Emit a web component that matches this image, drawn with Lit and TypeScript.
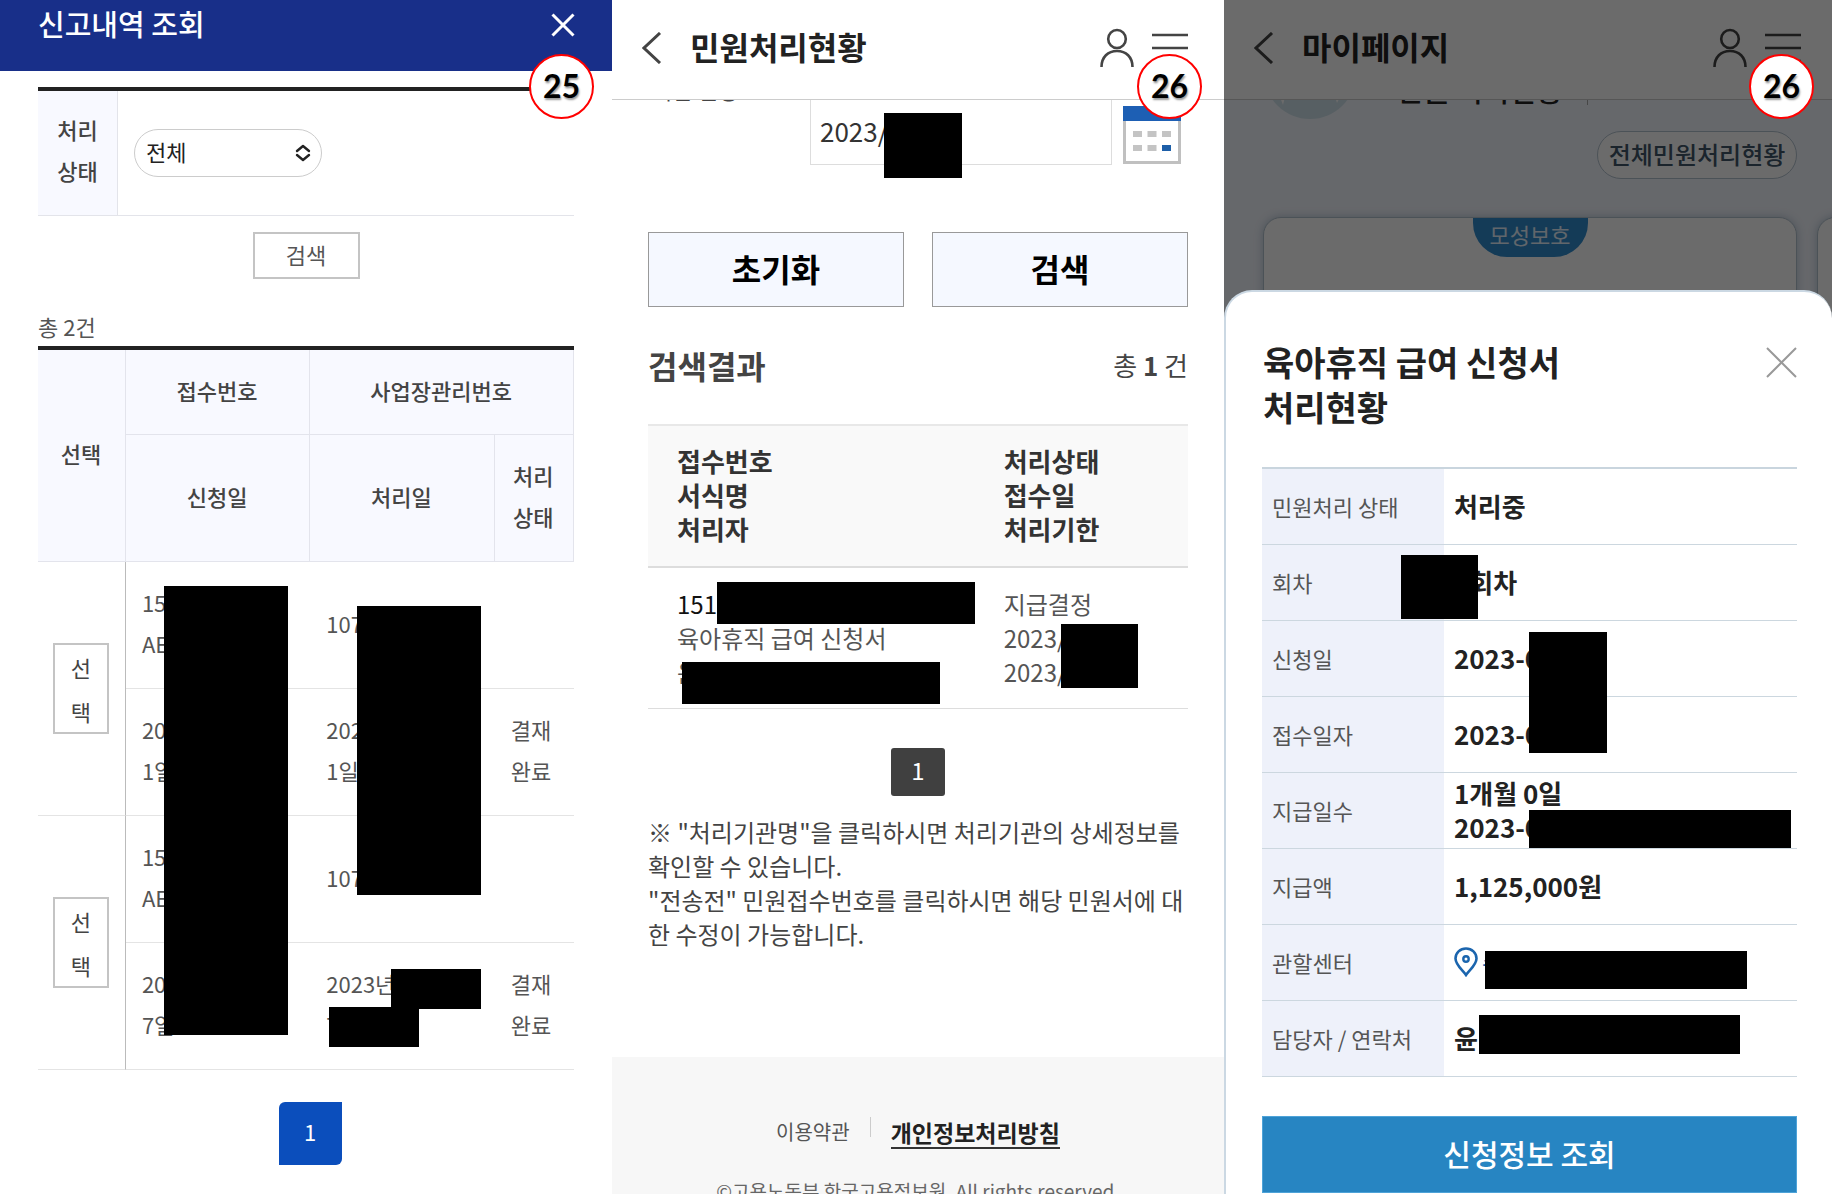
import { LitElement, html, css } from "lit";
import { customElement, property } from "lit/decorators.js";
import { styleMap } from "lit/directives/style-map.js";

type Box = [left: number, top: number, width: number, height: number];

const masks = (boxes: Box[]) =>
  boxes.map(
    ([l, t, w, h]) =>
      html`<span
        class="mask"
        style=${styleMap({ left: `${l}px`, top: `${t}px`, width: `${w}px`, height: `${h}px` })}
      ></span>`
  );

const shared = css`
  :host {
    display: block;
    position: relative;
    overflow: hidden;
    min-width: 0;
    height: 100%;
    background: #fff;
  }
  * {
    box-sizing: border-box;
  }
  h1,
  h2,
  p {
    margin: 0;
  }
  button {
    font: inherit;
    color: inherit;
    padding: 0 0 4px;
    border: 0;
    background: none;
    cursor: pointer;
  }
  svg {
    display: block;
  }
  table {
    width: 100%;
    table-layout: fixed;
    border-collapse: separate;
    border-spacing: 0;
  }
  th,
  td {
    padding: 0;
    text-align: left;
    font-weight: 400;
  }
  .icon {
    padding: 0;
  }
  .mask {
    position: absolute;
    background: #000;
  }
`;

@customElement("step-badge")
export class StepBadge extends LitElement {
  static styles = css`
    :host {
      position: absolute;
      z-index: 5;
      top: 54px;
      right: 18px;
      display: flex;
      align-items: center;
      justify-content: center;
      box-sizing: border-box;
      width: 65px;
      height: 65px;
      padding-bottom: 2px;
      border: 2px solid #f00;
      border-radius: 50%;
      background: #fff;
      color: #000;
      font: 700 32px/32px Lato, "Liberation Sans", sans-serif;
      text-shadow: 1px 2px 2px rgba(0, 0, 0, 0.4);
    }
  `;
  render() {
    return html`<slot></slot>`;
  }
}

@customElement("app-bar")
export class AppBar extends LitElement {
  @property() heading = "";
  static styles = [
    shared,
    css`
      :host {
        height: 100px;
        border-bottom: 1px solid #ccc;
        box-sizing: border-box;
      }
      .bar {
        display: flex;
        align-items: center;
        height: 96px;
        padding: 0 var(--bar-end, 36px) 0 30px;
      }
      h1 {
        flex: 1;
        margin-left: 28px;
        padding-bottom: 4px;
        color: #222;
        font-size: 32px;
        line-height: 40px;
        font-weight: 700;
      }
      .menu {
        margin-left: 18px;
      }
    `,
  ];
  render() {
    return html`<div class="bar">
      <button class="icon" aria-label="뒤로">
        <svg width="20" height="32" viewBox="0 0 20 32" fill="none" stroke="#444" stroke-width="3">
          <path d="M18 1 2 16 18 31" />
        </svg>
      </button>
      <h1>${this.heading}</h1>
      <button class="icon" aria-label="내 정보">
        <svg width="34" height="40" viewBox="0 0 34 40" fill="none" stroke="#444" stroke-width="2.6">
          <ellipse cx="17" cy="11" rx="8.8" ry="9" />
          <path d="M1.500 39C1.500 29 8 23 17 23s15.500 6 15.500 16" />
        </svg>
      </button>
      <button class="icon menu" aria-label="메뉴">
        <svg width="36" height="32" viewBox="0 0 36 32" stroke="#444" stroke-width="2.6">
          <path d="M0 3H36M0 16H36M0 29H36" />
        </svg>
      </button>
    </div>`;
  }
}

@customElement("report-screen")
export class ReportScreen extends LitElement {
  static styles = [
    shared,
    css`
      header {
        display: flex;
        justify-content: space-between;
        align-items: flex-start;
        height: 71px;
        padding: 3px 37px 0 38px;
        background: #182f89;
        color: #fff;
      }
      h1 {
        font-size: 29px;
        line-height: 40px;
        font-weight: 500;
      }
      .close {
        margin-top: 10px;
      }
      main {
        padding: 16px 38px 0;
        color: #555;
        font-size: 22px;
        line-height: 41px;
      }
      p {
        line-height: 40px;
      }
      table {
        border-top: 4px solid #222;
      }
      .filter .label {
        width: 80px;
        height: 125px;
        padding: 0 18px 6px;
        text-align: center;
        font-weight: 500;
        color: #444;
        background: #f8f9ff;
        border: 1px solid #e3e4ea;
        border-width: 0 1px 1px 0;
      }
      .filter td {
        padding-left: 16px;
        border-bottom: 1px solid #e3e4ea;
      }
      .select {
        position: relative;
        display: block;
        width: 188px;
      }
      select {
        display: block;
        width: 100%;
        height: 48px;
        padding: 0 11px 4px;
        appearance: none;
        border: 1px solid #ccc;
        border-radius: 24px;
        background: #fff;
        color: #222;
        font: inherit;
      }
      .select svg {
        position: absolute;
        right: 11px;
        top: 15px;
        pointer-events: none;
      }
      .search {
        display: block;
        width: 107px;
        height: 47px;
        margin: 16px auto 27px;
        border: 2px solid #c4c4c4;
        line-height: 36px;
      }
      .w1 {
        width: 16.4%;
      }
      .w2 {
        width: 34.4%;
      }
      .w4 {
        width: 14.8%;
      }
      .list thead th {
        height: 127px;
        padding: 0 16px 4px 15px;
        text-align: center;
        font-weight: 500;
        color: #444;
        background: #f8f9ff;
        border: 1px solid #e3e4ec;
        border-width: 0 1px 1px 0;
      }
      .list thead .top {
        height: 85px;
      }
      .list tbody td {
        height: 127px;
        padding: 0 16px 4px;
        border-bottom: 1px solid #e4e4e4;
        white-space: nowrap;
      }
      .list tbody .pick {
        padding: 0 16px 0 15px;
        border-right: 1px solid #bbb;
      }
      .pick button {
        display: block;
        width: 100%;
        height: 91px;
        padding: 0 12px 3px;
        border: 2px solid #c4c4c4;
        line-height: 44px;
        white-space: normal;
        color: #444;
      }
      .page {
        display: block;
        width: 63px;
        height: 63px;
        margin: 32px auto 0;
        position: relative;
        left: 4px;
        border-radius: 6px 0;
        background: #0b4ebc;
        color: #fff;
      }
    `,
  ];

  private rows = [
    { no: "AE", firm: "107", day: "1일", done: ["202", "1일"] },
    { no: "AE", firm: "107", day: "7일", done: ["2023년", "7"] },
  ];

  render() {
    return html`
      <header>
        <h1>신고내역 조회</h1>
        <button class="icon close" aria-label="닫기">
          <svg width="24" height="24" viewBox="0 0 24 24" fill="none" stroke="#fff" stroke-width="3">
            <path d="M1.500 1.500 22.500 22.500M22.500 1.500 1.500 22.500" />
          </svg>
        </button>
      </header>
      <main>
        <table class="filter">
          <tr>
            <th class="label"><label for="state">처리<br />상태</label></th>
            <td>
              <span class="select">
                <select id="state">
                  <option>전체</option>
                </select>
                <svg width="16" height="18" viewBox="0 0 16 18" fill="none" stroke="#222" stroke-width="2.4" stroke-linecap="round" stroke-linejoin="round">
                  <path d="M2 7 8 2l6 5M2 11l6 5 6-5" />
                </svg>
              </span>
            </td>
          </tr>
        </table>
        <button class="search">검색</button>
        <p>총 2건</p>
        <table class="list">
          <colgroup>
            <col class="w1" />
            <col class="w2" />
            <col class="w2" />
            <col class="w4" />
          </colgroup>
          <thead>
            <tr>
              <th rowspan="2">선택</th>
              <th class="top">접수번호</th>
              <th class="top" colspan="2">사업장관리번호</th>
            </tr>
            <tr>
              <th>신청일</th>
              <th>처리일</th>
              <th>처리<br />상태</th>
            </tr>
          </thead>
          <tbody>
            ${this.rows.map(
              (r) => html`<tr>
                  <td class="pick" rowspan="2"><button>선<br />택</button></td>
                  <td>15<br />${r.no}</td>
                  <td colspan="2">${r.firm}</td>
                </tr>
                <tr>
                  <td>20<br />${r.day}</td>
                  <td>${r.done[0]}<br />${r.done[1]}</td>
                  <td>결재<br />완료</td>
                </tr>`
            )}
          </tbody>
        </table>
        <button class="page">1</button>
      </main>
      ${masks([
        [164, 586, 124, 449],
        [357, 606, 124, 289],
        [391, 969, 90, 40],
        [329, 1007, 90, 40],
      ])}
      <step-badge>25</step-badge>
    `;
  }
}

@customElement("status-screen")
export class StatusScreen extends LitElement {
  static styles = [
    shared,
    css`
      :host {
        display: flex;
        flex-direction: column;
        color: #444;
        font-size: 24px;
        line-height: 34px;
      }
      app-bar {
        flex: none;
      }
      main {
        flex: none;
        height: 957px;
        padding: 0 36px;
        overflow: hidden;
      }
      .field {
        display: flex;
        margin-top: -4px;
      }
      .field label {
        flex: 1;
        margin-top: -21px;
        padding-left: 4px;
        font-size: 22px;
        line-height: 28px;
      }
      .field input {
        width: 302px;
        height: 69px;
        padding: 0 9px;
        border: 1px solid #ddd;
        color: #333;
        font: inherit;
        font-size: 26px;
      }
      .cal {
        margin: 9px 7px 0 11px;
      }
      .actions {
        display: grid;
        grid-template-columns: 1fr 1fr;
        gap: 28px;
        margin-top: 67px;
      }
      .actions button {
        height: 75px;
        border: 1px solid #999;
        background: #f5f8ff;
        color: #000;
        font-size: 32px;
        font-weight: 700;
      }
      .result {
        display: flex;
        align-items: center;
        justify-content: space-between;
        margin: 38px 0 39px;
      }
      .result span {
        font-size: 26px;
      }
      h2 {
        font-size: 32px;
        line-height: 40px;
        font-weight: 700;
      }
      .a {
        width: 60.5%;
      }
      th {
        height: 144px;
        padding: 0 0 2px 29px;
        border-top: 2px solid #e8e8e8;
        border-bottom: 2px solid #ddd;
        background: #f9f9f9;
        color: #333;
        font-size: 26px;
        line-height: 34px;
        font-weight: 700;
      }
      td {
        height: 141px;
        padding-left: 29px;
        border-bottom: 1px solid #ddd;
        color: #555;
      }
      .num {
        color: #111;
        text-decoration: none;
      }
      .page {
        display: block;
        width: 54px;
        height: 48px;
        margin: 39px auto 19px;
        border-radius: 3px;
        background: #404040;
        color: #fff;
      }
      footer {
        flex: none;
        padding: 60px 0;
        background: #f7f7f7;
        text-align: center;
        color: #666;
        font-size: 19px;
      }
      .links {
        display: flex;
        justify-content: center;
        align-items: flex-start;
        margin-bottom: 25px;
        font-size: 20px;
      }
      .links a {
        color: #555;
        text-decoration: none;
        line-height: 30px;
      }
      .links .strong {
        margin-left: 20px;
        border-bottom: 2px solid #333;
        color: #222;
        font-size: 23px;
        font-weight: 700;
      }
      .links i {
        width: 1px;
        height: 20px;
        margin-left: 20px;
        background: #ccc;
      }
      step-badge {
        right: 22px;
      }
    `,
  ];
  render() {
    return html`
      <app-bar heading="민원처리현황"></app-bar>
      <main>
        <div class="field">
          <label for="date">기간 설정</label>
          <input id="date" value="2023/" />
          <button class="icon cal" aria-label="달력">
            <svg width="58" height="58" viewBox="0 0 58 58">
              <rect x="1.500" y="1.500" width="55" height="55" fill="#fff" stroke="#c0c0c0" stroke-width="3" />
              <rect width="58" height="15" fill="#1d5fb4" />
              <path d="M10 25h9v6h-9zM24.500 25h9v6h-9zM39 25h9v6h-9zM10 39h9v6h-9zM24.500 39h9v6h-9z" fill="#c4c4c4" />
              <path d="M39 39h9v6h-9z" fill="#1d5fa8" />
            </svg>
          </button>
        </div>
        <div class="actions"><button>초기화</button><button>검색</button></div>
        <div class="result">
          <h2>검색결과</h2>
          <span>총 <b>1</b> 건</span>
        </div>
        <table>
          <colgroup>
            <col class="a" />
            <col />
          </colgroup>
          <tr>
            <th>접수번호<br />서식명<br />처리자</th>
            <th>처리상태<br />접수일<br />처리기한</th>
          </tr>
          <tr>
            <td><a class="num" href="#">151</a><br />육아휴직 급여 신청서<br />윤</td>
            <td>지급결정<br />2023/<br />2023/</td>
          </tr>
        </table>
        <button class="page">1</button>
        <p>※ "처리기관명"을 클릭하시면 처리기관의 상세정보를<br />확인할 수 있습니다.</p>
        <p>"전송전" 민원접수번호를 클릭하시면 해당 민원서에 대<br />한 수정이 가능합니다.</p>
      </main>
      <footer>
        <div class="links">
          <a href="#">이용약관</a><i></i><a class="strong" href="#">개인정보처리방침</a>
        </div>
        <p>©고용노동부 한국고용정보원. All rights reserved.</p>
      </footer>
      ${masks([
        [272, 113, 78, 65],
        [105, 582, 258, 42],
        [70, 662, 258, 42],
        [449, 624, 77, 64],
      ])}
      <step-badge>26</step-badge>
    `;
  }
}

@customElement("mypage-screen")
export class MypageScreen extends LitElement {
  static styles = [
    shared,
    css`
      :host {
        --bar-end: 31px;
        background: #f3f7fe;
      }
      .scroll {
        padding: 0 35px 0 39px;
      }
      .profile {
        display: flex;
        height: 31px;
        overflow: hidden;
      }
      .avatar {
        flex: none;
        margin: -73px 40px 0 1px;
      }
      .profile p {
        margin-top: -27px;
        color: #222;
        font-size: 29px;
        line-height: 32px;
        font-weight: 500;
      }
      .profile i {
        width: 1px;
        height: 5px;
        margin-left: 24px;
        background: #aaa;
      }
      .all {
        display: block;
        width: 200px;
        height: 48px;
        margin-left: auto;
        border: 1px solid #b4c3d0;
        border-radius: 24px;
        background: #fff;
        color: #41566a;
        font-size: 24px;
        line-height: 44px;
        font-weight: 500;
        white-space: nowrap;
      }
      .cards {
        display: grid;
        grid-template-columns: 100% 100%;
        gap: 20px;
        margin-top: 38px;
      }
      .card {
        height: 120px;
        border: 1px solid #b4c3d0;
        border-radius: 18px;
        background: #fff;
        box-shadow: 0 0 8px rgba(90, 120, 150, 0.4);
      }
      .tag {
        width: 115px;
        height: 39px;
        margin: 0 auto;
        border-radius: 0 0 34px 34px;
        background: #308ccf;
        color: #e6f4ff;
        font-size: 22px;
        line-height: 32px;
        text-align: center;
      }
      .dim {
        position: absolute;
        inset: 0;
        background: rgba(0, 0, 0, 0.58);
      }
      .sheet {
        position: absolute;
        inset: 290px 0 0;
        padding: 47px 35px 0 36px;
        border: 2px solid #cbd8e3;
        border-width: 2px 0 0 2px;
        border-radius: 28px 28px 0 0;
        background: #fff;
      }
      .head {
        display: flex;
        justify-content: space-between;
        align-items: flex-start;
        margin-bottom: 38px;
      }
      h2 {
        padding-left: 1px;
        color: #222;
        font-size: 34px;
        line-height: 45px;
        font-weight: 700;
      }
      .close {
        margin-top: 8px;
      }
      table {
        border-top: 2px solid #c9d5de;
      }
      th,
      td {
        height: 76px;
        padding: 0 0 1px 10px;
        border-bottom: 1px solid #ccd7df;
      }
      th {
        width: 34%;
        background: #eef1fa;
        color: #555;
        font-size: 22px;
        line-height: 30px;
      }
      td {
        color: #222;
        font-size: 26px;
        line-height: 34px;
        font-weight: 700;
      }
      .center {
        display: flex;
        align-items: center;
        gap: 4px;
        color: #1b65ae;
        font-size: 24px;
        font-weight: 400;
      }
      .submit {
        display: block;
        width: 100%;
        height: 77px;
        margin-top: 39px;
        border: 1px solid #4ea3d8;
        background: #2785c2;
        color: #fff;
        font-size: 30px;
        font-weight: 500;
      }
    `,
  ];

  private rows: [string, unknown][] = [
    ["민원처리 상태", "처리중"],
    ["회차", "1회차"],
    ["신청일", "2023-0"],
    ["접수일자", "2023-0"],
    ["지급일수", html`1개월 0일<br />2023-0`],
    ["지급액", "1,125,000원"],
    [
      "관할센터",
      html`<span class="center">
        <svg width="24" height="30" viewBox="0 0 24 30" fill="none" stroke="#1b65ae" stroke-width="2.6">
          <path d="M12 28C9 23.500 1.500 18 1.500 11.500a10.500 10 0 0 1 21 0C22.500 18 15 23.500 12 28Z" />
          <circle cx="12" cy="12" r="2.7" stroke-width="2.4" />
        </svg>
        수</span
      >`,
    ],
    ["담당자 / 연락처", "윤"],
  ];

  render() {
    return html`
      <app-bar heading="마이페이지"></app-bar>
      <div class="scroll">
        <div class="profile">
          <svg class="avatar" width="92" height="92" viewBox="0 0 92 92">
            <circle cx="46" cy="46" r="46" fill="#cfe2ec" />
            <path d="M16 70l5 0-2 8zM71 70l5 0-3 6z" fill="#fff" />
          </svg>
          <p>민원 처리현황</p>
          <i></i>
        </div>
        <button class="all">전체민원처리현황</button>
        <div class="cards">
          <div class="card"><div class="tag">모성보호</div></div>
          <div class="card"></div>
        </div>
      </div>
      <div class="dim"></div>
      <section class="sheet">
        <div class="head">
          <h2>육아휴직 급여 신청서<br />처리현황</h2>
          <button class="icon close" aria-label="닫기">
            <svg width="31" height="31" viewBox="0 0 31 31" stroke="#999" stroke-width="2">
              <path d="M1 1 30 30M30 1 1 30" />
            </svg>
          </button>
        </div>
        <table>
          ${this.rows.map(([k, v]) => html`<tr><th>${k}</th><td>${v}</td></tr>`)}
        </table>
        <button class="submit">신청정보 조회</button>
      </section>
      ${masks([
        [177, 555, 77, 64],
        [305, 632, 78, 121],
        [305, 810, 262, 38],
        [261, 951, 262, 38],
        [255, 1015, 261, 39],
      ])}
      <step-badge>26</step-badge>
    `;
  }
}

@customElement("app-root")
export class AppRoot extends LitElement {
  static styles = css`
    :host {
      display: grid;
      grid-template-columns: 612fr 612fr 608fr;
      height: 100vh;
      overflow: hidden;
      font-family: "Noto Sans CJK KR", sans-serif;
    }
  `;
  render() {
    return html`
      <report-screen></report-screen>
      <status-screen></status-screen>
      <mypage-screen></mypage-screen>
    `;
  }
}
